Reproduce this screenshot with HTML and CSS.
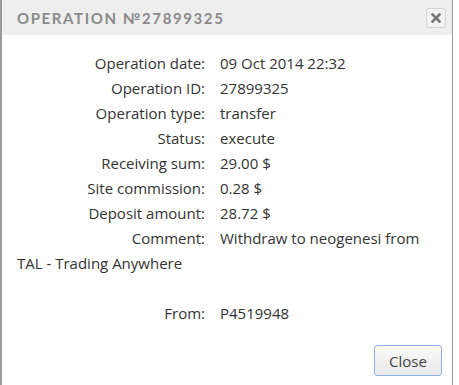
FILE: index.html
```html
<!DOCTYPE html>
<html lang="en">
<head>
    <meta charset="UTF-8">
    <title>Operation</title>
    <link rel="stylesheet" href="styles.css">
</head>
<body>
    <div class="dialog">
        <div class="dialog-header">
            <span class="dialog-title">Operation №27899325</span>
            <button class="close-x" title="Close">
                <svg width="10" height="10" viewBox="0 0 10 10"><path d="M1.5 1.5 L8.5 8.5 M8.5 1.5 L1.5 8.5" stroke="#777" stroke-width="2.6" stroke-linecap="square"/></svg>
            </button>
        </div>
        <div class="dialog-body">
            <div class="info">
                <span class="label">Operation date:</span><span class="value">09 Oct 2014 22:32</span>
                <span class="label">Operation ID:</span><span class="value">27899325</span>
                <span class="label">Operation type:</span><span class="value">transfer</span>
                <span class="label">Status:</span><span class="value">execute</span>
                <span class="label">Receiving sum:</span><span class="value">29.00 $</span>
                <span class="label">Site commission:</span><span class="value">0.28 $</span>
                <span class="label">Deposit amount:</span><span class="value">28.72 $</span>
                <span class="label">Comment:</span><span class="value">Withdraw to neogenesi from</span>
                <span class="wrap">TAL - Trading Anywhere</span>
                <span class="wrap"></span>
                <span class="label">From:</span><span class="value">P4519948</span>
            </div>
        </div>
        <div class="dialog-footer">
            <button class="btn">Close</button>
        </div>
    </div>
</body>
</html>
```
FILE: styles.css
```css
body {
    margin: 0;
    background: #fff;
    font-family: "Open Sans", sans-serif;
}
.dialog {
    width: 450px;
    height: 385px;
    border-left: 2px solid #9a9a9a;
    border-right: 1px solid #9a9a9a;
    display: flex;
    flex-direction: column;
    overflow: hidden;
}
.dialog-header {
    flex-shrink: 0;
    background: #eeeeee;
    height: 35px;
    display: flex;
    align-items: center;
    justify-content: space-between;
    padding: 0 6px 0 15px;
}
.dialog-title {
    font-family: Lato, sans-serif;
    text-transform: uppercase;
    font-size: 15px;
    font-weight: bold;
    letter-spacing: 1.6px;
    color: #8a8a8a;
}
.close-x {
    width: 20px;
    height: 20px;
    padding: 0;
    border: 1px solid #d6d6d6;
    border-radius: 3px;
    background: #f2f2f2;
    display: flex;
    align-items: center;
    justify-content: center;
}
.dialog-body {
    padding: 15px 0 0 15px;
}
.info {
    display: grid;
    grid-template-columns: 188px auto;
    column-gap: 15px;
    grid-auto-rows: 25px;
    align-items: center;
    font-size: 15px;
    color: #333;
}
.label {
    text-align: right;
}
.wrap {
    grid-column: 1 / 3;
}
.dialog-footer {
    flex-shrink: 0;
    display: flex;
    justify-content: flex-end;
    padding: 20px 10px 0 0;
}
.btn {
    width: 68px;
    height: 31px;
    border: 1px solid #8fb0e6;
    border-radius: 3px;
    background: linear-gradient(#fafafa, #e8e8e8);
    font-family: "Open Sans", sans-serif;
    font-size: 15px;
    color: #444;
}
```
